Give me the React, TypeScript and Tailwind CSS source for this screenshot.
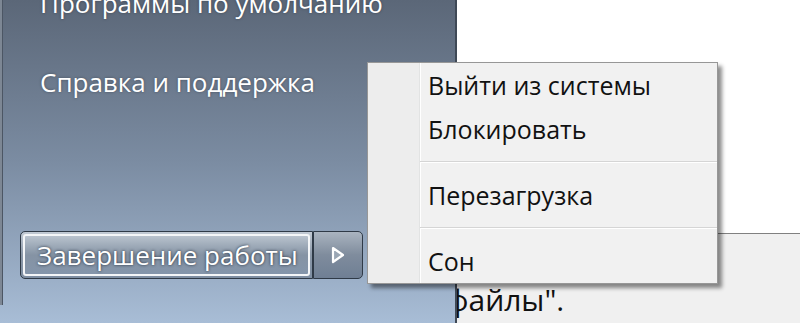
import React from "react";

const items = [
  { label: "Выйти из системы" },
  { label: "Блокировать", sepAfter: true },
  { label: "Перезагрузка", sepAfter: true },
  { label: "Сон" },
];

function MenuSeparator() {
  return (
    <div className="flex h-[22px] items-center">
      <div className="w-[52px] shrink-0 self-stretch" />
      <div className="flex-1 border-t border-b border-t-[#d5d5d5] border-b-white" />
    </div>
  );
}

function ShutdownMenu() {
  return (
    <div className="absolute left-[367px] top-[62px] z-20 w-[351px] border border-[#979797] bg-[#f1f1f1] shadow-[4px_4px_4px_rgba(0,0,0,0.45)]">
      {/* icon gutter */}
      <div className="absolute left-0 top-0 bottom-0 w-[52px] border-r border-r-[#e2e3e3] bg-[#ededed]">
        <div className="absolute right-[-2px] top-0 bottom-0 w-px bg-white" />
      </div>
      <div className="relative flex flex-col">
        {items.map((it) => (
          <React.Fragment key={it.label}>
            <div className="flex h-[44px] items-center pl-[60px] text-[25px] text-[#111] leading-none">
              {it.label}
            </div>
            {it.sepAfter && <MenuSeparator />}
          </React.Fragment>
        ))}
      </div>
    </div>
  );
}

export default function App() {
  return (
    <div className="relative flex h-[323px] w-[800px] overflow-hidden font-['Open_Sans',sans-serif]">
      {/* start menu right pane */}
      <div className="relative z-10 flex w-[457px] shrink-0 flex-col border-r-2 border-[#3f4956] bg-gradient-to-b from-[#5b6778] via-[#7b8ca2] to-[#a8bdd6]">
        <div className="absolute left-0 top-0 h-[305px] w-[2px] bg-[#7d8794]" />
        <div className="absolute left-[2px] top-0 h-[305px] w-px bg-[#4c5664]" />
        <div className="flex flex-col pl-[40px] text-[26px] leading-none text-white [text-shadow:0_0_3px_rgba(0,0,0,0.35)]">
          <div className="-mt-[10px] h-[46px] whitespace-nowrap">Программы по умолчанию</div>
          <div className="mt-[33px] whitespace-nowrap">Справка и поддержка</div>
        </div>

        <div className="mt-[136px] flex pl-[20px]">
          <div className="flex h-[48px] w-[293px] items-center rounded-l-[5px] border border-[#2f3a47] bg-gradient-to-b from-[#c3cbd5] via-[#8b98a8] to-[#7e8ea2] p-[2px]">
            <div className="flex h-full w-full items-center rounded-[3px] border-2 border-[#f4f6f8] bg-gradient-to-b from-[#b9c3ce] from-0% via-[#8593a4] via-50% to-[#8495aa] pl-[12px] text-[26px] text-white [text-shadow:0_0_3px_rgba(20,30,45,0.9)] whitespace-nowrap">
              Завершение работы
            </div>
          </div>
          <div className="flex h-[48px] w-[50px] items-center justify-center rounded-r-[5px] border border-[#2f3a47] bg-gradient-to-b from-[#aab4c0] via-[#7f8c9d] to-[#6f7f94]">
            <svg width="14" height="18" viewBox="0 0 14 18">
              <polygon points="2,2 12,9 2,16" fill="#9aa6b4" stroke="#ffffff" strokeWidth="2.2" strokeLinejoin="round" />
            </svg>
          </div>
        </div>
      </div>

      {/* document behind */}
      <div className="flex flex-1 flex-col">
        <div className="h-[234px] border-b border-[#808080] bg-white" />
        <div className="flex-1 bg-[#f0f0f0] pt-[51px]">
          <div className="-ml-[10px] text-[30px] leading-none text-[#111] whitespace-nowrap">файлы".</div>
        </div>
      </div>

      <ShutdownMenu />
    </div>
  );
}
